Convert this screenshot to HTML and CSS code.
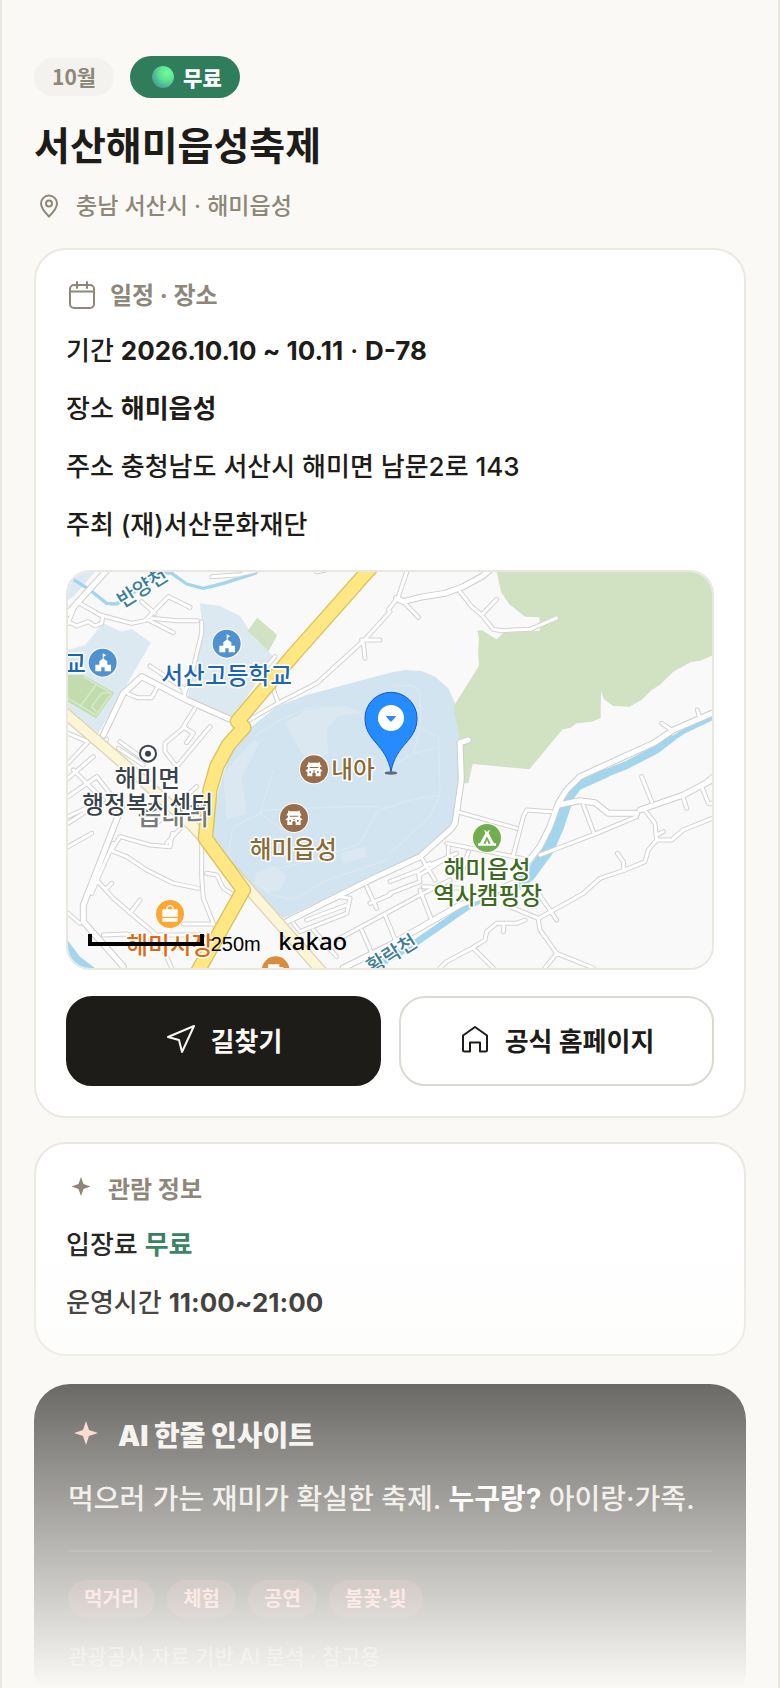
FILE: index.html
```html
<!DOCTYPE html>
<html lang="ko">
<head>
    <meta charset="UTF-8">
    <meta name="viewport" content="width=device-width, initial-scale=1.0">
    <title>서산해미읍성축제</title>
    <link rel="stylesheet" href="styles.css">
</head>
<body>
    <main class="page">
        <header class="hero">
            <div class="badges">
                <span class="badge">10월</span>
                <span class="badge badge-free">
                    <svg class="dot" viewBox="0 0 22 22" aria-hidden="true">
                        <defs>
                            <radialGradient id="ball" cx="0.68" cy="0.32" r="0.75">
                                <stop offset="0" stop-color="#6dfda0"/>
                                <stop offset="0.45" stop-color="#5fe293"/>
                                <stop offset="1" stop-color="#4a9a98"/>
                            </radialGradient>
                        </defs>
                        <circle cx="11" cy="11" r="11" fill="url(#ball)"/>
                    </svg>
                    무료
                </span>
            </div>
            <h1 class="title">서산해미읍성축제</h1>
            <p class="location">
                <svg class="pin-icon" viewBox="0 0 30 30" aria-hidden="true">
                    <path d="M15 25.500C10 20.500 7 16.500 7 12.500a8 8 0 0 1 16 0c0 4-3 8-8 13z"/>
                    <circle cx="15" cy="12.500" r="3"/>
                </svg>
                충남 서산시 · 해미읍성
            </p>
        </header>

        <section class="card">
            <h2 class="card-title">
                <svg class="calendar-icon" viewBox="0 0 32 32" aria-hidden="true">
                    <rect x="4" y="5" width="24" height="23" rx="4"/>
                    <path d="M4 11.500h24M11 2v6M21 2v6"/>
                </svg>
                일정 · 장소
            </h2>
            <div class="rows">
                <p>기간 <strong>2026.10.10 ~ 10.11</strong> · <strong>D-78</strong></p>
                <p>장소 <strong>해미읍성</strong></p>
                <p>주소 충청남도 서산시 해미면 남문2로 143</p>
                <p>주최 (재)서산문화재단</p>
            </div>

            <div class="map">
                <svg class="map-canvas" viewBox="24 36 1932 1188" preserveAspectRatio="xMidYMid slice" role="img" aria-label="해미읍성 지도">
                    <defs>
                        <g id="roads-small">
                            <path d="M24 190L50 125L120 165L215 190L255 182L325 110L390 142"/>
                            <path d="M24 185L50 198L85 185L105 198L125 190L128 170"/>
                            <path d="M245 125L285 160M265 180L340 218M275 175L350 182L412 182"/>
                            <path d="M455 50L540 44L620 24M770 36L840 20"/>
                            <path d="M425 185L425 220L408 290L395 345L370 410"/>
                            <path d="M270 318L370 385L375 410M205 402L232 413L275 413L290 385"/>
                            <path d="M645 290L610 330M632 365L655 430M560 485L650 432L770 370L915 238L990 155M905 240L960 240M910 250L915 295"/>
                            <path d="M405 445L370 500L400 520L380 548M375 500L315 550L315 575L350 620L450 500"/>
                            <path d="M140 538L125 552M24 520L60 535L85 545L24 610M180 545L240 590M175 565L250 615M170 590L215 620"/>
                            <path d="M24 655L100 590M24 710L110 650L150 700M40 630L130 720L24 770M24 790L100 740"/>
                            <path d="M155 870L180 830L270 855L330 860L338 820M150 870L200 890L260 930L340 970L415 985"/>
                            <path d="M160 850L120 940L95 1000M110 960L160 1015L230 1075L290 1125L335 1224M155 970L140 985M210 1060L240 1020"/>
                            <path d="M425 850L425 950L430 1015L462 1095M370 1092L460 1092M440 940L470 945L490 985L530 1010"/>
                            <path d="M130 1125L200 1122L260 1140M300 1125L420 1125M24 1060L60 1090"/>
                            <path d="M320 850L420 740M290 790L410 680M24 860L95 820"/>
                            <path d="M1040 36L1015 110L985 150M1030 125L1075 172M1200 95L1235 140L1265 165L1310 118M1265 165L1300 208L1325 212L1410 208L1490 174"/>
                            <path d="M1920 475L1912 450M1835 510L1805 490M1745 650L1775 725M1870 715L1880 745M1925 680L1945 730L1956 730"/>
                            <path d="M1190 755L1370 805M1475 755L1400 750L1390 770L1360 885M1160 850L1360 890L1410 900M1165 860L1165 890L1080 945M1225 875L1210 925M1085 895L1125 960"/>
                            <path d="M1440 885L1610 820L1730 770M1570 735L1600 815M1750 745L1785 790L1790 840L1765 870L1755 905L1695 930L1620 955L1570 1000L1500 1040L1435 1075L1350 1040"/>
                            <path d="M1790 840L1835 840L1870 810L1956 775M1790 825L1810 815M1672 880L1690 905L1692 930M1435 1000L1490 1080"/>
                            <path d="M1435 1080L1440 1110L1490 1180L1600 1224M1490 1180L1455 1224M1395 1080L1370 1090L1310 1090L1280 1115L1275 1140L1235 1165L1160 1205L1140 1224M1240 1165L1300 1224M1332 1095L1330 1115"/>
                            <path d="M690 1075L840 1010L870 1015L860 1060L720 1115L700 1090M740 1080L860 1035M990 965L1080 930L1110 910M990 1005L930 1030M1075 940L1080 965L990 1000"/>
                            <path d="M920 980L950 1045M830 1140L1080 1005L1170 960M760 1110L830 1190M905 1110L940 1190M975 1065L1010 1150M1080 990L1115 1080M1090 980L1210 985"/>
                            <path d="M1110 915L1190 880M1956 650L1920 680"/>
                        </g>
                        <g id="roads-big">
                            <path d="M24 160L150 20"/>
                            <path d="M130 525L190 400L245 350L380 420L515 480"/>
                            <path d="M185 740L70 1035L70 1085L190 1220"/>
                            <path d="M1010 115L1030 125L1080 112L1155 100L1210 80L1265 50L1290 30"/>
                            <path d="M1225 540L1200 548L1204 660L1185 790L1175 805L1080 890L940 955L680 1085"/>
                            <path d="M1956 460L1840 510L1780 550L1560 650L1520 690L1495 730L1470 800L1440 860L1400 910"/>
                            <path d="M1495 735L1560 722L1605 728L1645 760L1730 760"/>
                            <path d="M1740 750L1870 705L1956 660"/>
                            <path d="M850 1224L990 1155L1200 1035L1360 970"/>
                        </g>
                        <g id="school">
                            <circle r="45" fill="#fff"/>
                            <circle r="42" fill="#5092cf"/>
                            <path fill="#fff" d="M-22 26V6h12v-10L0-12l0-16 11 6-8 4v6l11 8V6h11v20H6V14h-10v12z"/>
                        </g>
                        <g id="palace">
                            <circle r="45" fill="#fff"/>
                            <circle r="42" fill="#986d4b"/>
                            <path fill="#fff" d="M-17-23l4 3h26l4-3 1 7 5 8-5 1v5l8 7-6 2v14H5V12q-5-6-10 0v9h-15V7l-6-2 8-7v-5l-5-1 5-8z"/>
                            <path fill="#986d4b" d="M-13-7h26v3h-26zM-14 6h5v5h-5zM9 6h5v5H9zM-2 3h4v4h-4z"/>
                        </g>
                    </defs>

                    <rect x="24" y="36" width="1932" height="1188" fill="#f9f9f9"/>

                    <!-- school grounds, castle, forest -->
                    <path fill="#dde9f1" d="M24 36H105L40 110L24 120zM24 270L75 255L130 190L185 215L215 207L273 248L115 520L24 450z"/>
                    <path fill="#dde9f1" d="M420 130L480 138L540 168L580 230L640 290L600 350L520 475L380 425L405 300L428 220z"/>
                    <path fill="#d2e4ef" d="M740 405L990 338L1035 330L1085 333L1125 350L1165 385L1190 440L1205 520L1208 660L1175 800L1090 880L670 1075L575 985L440 830L490 640L520 560L575 500L650 440z"/>
                    <g fill="#dce8f1">
                        <path d="M675 490L740 450L860 440L905 458L830 470L800 510L805 580L760 600L725 580z"/>
                        <path d="M490 640L580 540L600 545L545 650L560 760L500 780z"/>
                        <path d="M590 940L640 915L680 950L660 990L620 1000L580 970zM840 880L915 860L920 890L850 910z"/>
                    </g>
                    <g class="paths">
                        <path d="M500 900L520 800L620 750L860 740L960 740L900 850L760 900L640 930M580 530L660 480L740 445L860 440L960 500"/>
                        <path d="M1000 375L1060 378L1080 400L1080 505L1135 530L1140 700L1110 770L990 880M1080 505L1060 580L960 640M1060 580L1138 562M960 750L1050 720L1138 705"/>
                        <path d="M640 630L600 760L680 820M620 1000L700 1020L800 960L980 900"/>
                    </g>
                    <path fill="#d1e2c3" d="M1310 36L1323 95L1347 132L1395 170L1438 172L1440 212L1330 218L1310 238L1265 210L1252 212L1257 235L1254 280L1257 317L1180 440L1196 520L1203 600L1207 670L1225 670L1238 612L1408 628L1508 508L1530 504L1550 490L1595 485L1622 475L1623 393L1632 418L1660 438L1708 440L1745 420L1775 390L1800 374L1840 335L1893 306L1920 302L1956 287V36z"/>
                    <path fill="#d1e2c3" d="M592 173L652 225L625 275L563 212z"/>
                    <path fill="#c3dcae" d="M24 345L70 345L163 398L108 475L24 425z"/>
                    <path class="pitch" d="M24 415L108 465L155 400L70 350M60 440L108 375M150 398L125 400L95 440L110 455"/>

                    <!-- streams -->
                    <path class="stream" stroke-width="10" d="M40 58L90 90L140 130L170 132L205 110L300 36L335 40L380 72L430 85L490 70L590 38"/>
                    <path class="stream" stroke-width="24" d="M1600 655L1700 615L1790 568L1840 530"/>
                    <path class="stream" stroke-width="14" d="M1800 560L1870 515L1956 474"/>
                    <path class="stream" stroke-width="34" d="M1640 635L1550 675L1525 710L1495 800L1465 870L1410 945L1370 975"/>
                    <path class="stream" stroke-width="20" d="M1400 955L1230 1035L1065 1150L940 1224"/>
                    <path fill="#a3d6ec" d="M24 1142L60 1190L105 1224H24z"/>

                    <use href="#roads-small" class="road small-edge"/>
                    <use href="#roads-big" class="road big-edge"/>
                    <use href="#roads-small" class="road small-fill"/>
                    <use href="#roads-big" class="road big-fill"/>

                    <path class="road" stroke="#ded3b8" stroke-width="36" d="M10 455L230 645L400 800L560 980L790 1240"/>
                    <path class="road" stroke="#fcf6d6" stroke-width="28" d="M10 455L230 645L400 800L560 980L790 1240"/>
                    <path class="road" stroke="#d9c35c" stroke-width="46" d="M935 20L700 285L532 484L552 502L505 555L470 620L450 690L436 835L550 990L410 1240"/>
                    <path class="road" stroke="#ffe784" stroke-width="38" d="M935 20L700 285L532 484L552 502L505 555L470 620L450 690L436 835L550 990L410 1240"/>

                    <!-- labels and markers -->
                    <g class="label">
                        <text class="water" transform="translate(188 145) rotate(-32)">반양천</text>
                        <text class="water" transform="translate(936 1244) rotate(-32)">황락천</text>
                        <text class="blue" x="500" y="373" text-anchor="middle">서산고등학교</text>
                        <text class="blue" x="78" y="335" text-anchor="end">교</text>
                        <text class="brown" x="814" y="653">내아</text>
                        <text class="brown" x="700" y="894" text-anchor="middle">해미읍성</text>
                        <text class="gray" x="340" y="795" text-anchor="middle">읍내리</text>
                        <text class="slate" x="262" y="680" text-anchor="middle">해미면</text>
                        <text class="slate" x="263" y="760" text-anchor="middle">행정복지센터</text>
                        <text class="orange" x="329" y="1182" text-anchor="middle">해미시장</text>
                        <text class="green" x="1281" y="955" text-anchor="middle">해미읍성</text>
                        <text class="green" x="1283" y="1033" text-anchor="middle">역사캠핑장</text>
                    </g>
                    <use href="#school" x="500" y="251"/>
                    <use href="#school" x="128" y="308"/>
                    <use href="#palace" x="762" y="628"/>
                    <use href="#palace" x="702" y="774"/>
                    <circle cx="264" cy="581" r="24" fill="#fff" stroke="#39434b" stroke-width="6"/>
                    <circle cx="264" cy="581" r="9" fill="#39434b"/>
                    <g transform="translate(330 1062)">
                        <circle r="45" fill="#fff"/>
                        <circle r="42" fill="#ffa733"/>
                        <path fill="#fff" d="M-23-14h46V8h-46zM-23 12h46v11h-46z"/>
                        <path fill="none" stroke="#fff" stroke-width="4" d="M-9-12v-8q9-10 18 0v8"/>
                    </g>
                    <g transform="translate(647 1231)">
                        <circle r="45" fill="#fff"/>
                        <circle r="42" fill="#d98c3d"/>
                        <path fill="#fff" d="M-23-18h34v8h12v14H11v20h-34z"/>
                    </g>
                    <g transform="translate(1281 834)">
                        <circle r="45" fill="#fff"/>
                        <circle r="42" fill="#72ad4e"/>
                        <path fill="#fff" d="M-9-24l6 2 3 5 3-5 6-2-4 10 16 30h6v7h-54v-7h6l16-30z"/>
                        <path fill="#72ad4e" d="M0-5L11 17H4L0 5-4 17H-11z"/>
                    </g>

                    <ellipse cx="993" cy="639" rx="19" ry="5" fill="#5d6d7a"/>
                    <path fill="#268bfc" stroke="#0f5ac6" stroke-width="3" d="M993 635C978 550 915 545 915 474a78 77 0 0 1 156 0C1071 545 1008 550 993 635z"/>
                    <circle cx="993" cy="474" r="39" fill="#fff"/>
                    <path fill="#268bfc" d="M978 468h30q0 3-13 16-2 2-4 0-13-13-13-16z"/>

                    <!-- scale bar -->
                    <path fill="none" stroke="#000" stroke-width="12" d="M90 1122V1152H426V1122"/>
                    <text class="scale" x="452" y="1174">250m</text>
                    <text class="brand" x="655" y="1170">kakao</text>
                </svg>
            </div>

            <div class="actions">
                <button type="button" class="btn btn-dark">
                    <svg viewBox="0 0 32 32" aria-hidden="true"><path d="M29 3L3 14l11 3 3 12z"/></svg>
                    길찾기
                </button>
                <button type="button" class="btn">
                    <svg viewBox="0 0 32 32" aria-hidden="true"><path d="M16 4L4 12.500V27q0 1.500 1.500 1.500H11V19.500h10v9h5.500Q28 28.500 28 27V12.500z"/></svg>
                    공식 홈페이지
                </button>
            </div>
        </section>

        <section class="card">
            <h2 class="card-title">
                <svg class="star" viewBox="0 0 30 30" aria-hidden="true"><path d="M15 2l2.500 7 7 2.500-7 2.500L15 21l-2.500-7-7-2.500 7-2.500z"/></svg>
                관람 정보
            </h2>
            <div class="rows">
                <p>입장료 <strong class="free">무료</strong></p>
                <p>운영시간 <strong>11:00~21:00</strong></p>
            </div>
        </section>

        <section class="insight">
            <h2 class="insight-title">
                <svg class="insight-star" viewBox="0 0 36 36" aria-hidden="true"><path d="M18 3l3 9 9 3-9 3-3 9-3-9-9-3 9-3z"/></svg>
                AI 한줄 인사이트
            </h2>
            <p class="insight-text">먹으러 가는 재미가 확실한 축제. <strong>누구랑?</strong> 아이랑·가족.</p>
            <ul class="chips">
                <li>먹거리</li>
                <li>체험</li>
                <li>공연</li>
                <li>불꽃·빛</li>
            </ul>
            <p class="note">관광공사 자료 기반 AI 분석 · 참고용</p>
        </section>
        <div class="fade"></div>
    </main>
</body>
</html>
```
FILE: styles.css
```css
* {
    box-sizing: border-box;
}
body {
    margin: 0;
    background: #faf9f6;
    color: #1e1c18;
    font-family: Inter, "Noto Sans CJK KR", sans-serif;
    font-size: 26px;
    font-weight: 500;
    line-height: 42px;
}
h1, h2, p, ul {
    margin: 0;
    padding: 0;
}
strong {
    font-weight: 700;
}
.page {
    position: relative;
    height: 100vh;
    overflow: hidden;
    padding: 56px 32px 0;
    border-left: 2px solid #e9e8e1;
    border-right: 2px solid #e9e8e1;
}
.fade {
    position: absolute;
    left: -2px;
    right: -2px;
    bottom: 0;
    height: 468px;
    background: linear-gradient(rgba(250, 249, 246, 0), #faf9f6);
    pointer-events: none;
}

/* header */
.hero {
    margin-bottom: 24px;
}
.badges {
    display: flex;
    align-items: center;
    gap: 16px;
}
.badge {
    padding: 0 18px;
    border-radius: 21px;
    background: #f3f2ee;
    color: #8d8779;
    font-family: "Noto Sans CJK KR", sans-serif;
    font-size: 21px;
    font-weight: 700;
    line-height: 36px;
    padding-bottom: 2px;
}
.badge-free {
    display: flex;
    align-items: center;
    gap: 9px;
    padding: 0 18px 0 22px;
    background: #2f7d5b;
    color: #fff;
    font-weight: 900;
    line-height: 42px;
}
.dot {
    width: 22px;
    height: 22px;
}
.title {
    margin-top: 22px;
    font-size: 39px;
    font-weight: 700;
    line-height: 52px;
}
.location {
    display: flex;
    align-items: center;
    gap: 12px;
    margin-top: 16px;
    color: #8d8779;
    font-size: 23px;
    line-height: 36px;
}
.pin-icon {
    width: 30px;
    height: 30px;
    fill: none;
    stroke: #8d8779;
    stroke-width: 2;
}

/* cards */
.card {
    margin-bottom: 24px;
    padding: 30px;
    border: 2px solid #eae8e1;
    border-radius: 32px;
    background: #fff;
}
.card-title {
    display: flex;
    align-items: center;
    gap: 12px;
    margin-bottom: 18px;
    color: #8d8779;
    font-size: 24px;
    font-weight: 700;
    line-height: 32px;
}
.calendar-icon {
    width: 32px;
    height: 32px;
    fill: none;
    stroke: #8d8779;
    stroke-width: 2;
    stroke-linecap: round;
}
.star {
    width: 30px;
    height: 30px;
    fill: #8d8779;
}
.rows {
    display: flex;
    flex-direction: column;
    gap: 16px;
}
.free {
    color: #2f7d5b;
}

/* map */
.map {
    height: 400px;
    margin-top: 24px;
    overflow: hidden;
    border: 2px solid #eae6e0;
    border-radius: 24px;
}
.map-canvas {
    display: block;
    width: 100%;
    height: 100%;
}
.road {
    fill: none;
    stroke-linecap: round;
    stroke-linejoin: round;
}
.small-edge {
    stroke: #d2d2d2;
    stroke-width: 15px;
}
.small-fill {
    stroke: #fff;
    stroke-width: 9px;
}
.big-edge {
    stroke: #cdcdcd;
    stroke-width: 21px;
}
.big-fill {
    stroke: #fff;
    stroke-width: 15px;
}
.stream {
    fill: none;
    stroke: #a3d6ec;
    stroke-linejoin: round;
}
.paths {
    fill: none;
    stroke: #dce8f1;
    stroke-width: 4px;
}
.pitch {
    fill: none;
    stroke: #d9eacb;
    stroke-width: 4px;
}
.label {
    font-family: "Noto Sans CJK KR", sans-serif;
    font-size: 71px;
    font-weight: 500;
    paint-order: stroke;
    stroke: #fff;
    stroke-width: 9px;
    stroke-linejoin: round;
}
.water {
    fill: #3d7d99;
    font-size: 60px;
}
.blue {
    fill: #1b66b4;
}
.brown {
    fill: #8a6a35;
}
.gray {
    fill: #7b7b7b;
    font-size: 78px;
}
.slate {
    fill: #39434b;
}
.orange {
    fill: #e0690f;
}
.green {
    fill: #3d6b21;
}
.scale {
    font-family: "Liberation Sans", Arial, sans-serif;
    font-size: 60px;
    font-weight: 400;
}
.brand {
    font-family: "Noto Sans", sans-serif;
    font-size: 72px;
    font-weight: 500;
}

/* buttons */
.actions {
    display: flex;
    gap: 18px;
    margin-top: 26px;
}
.btn {
    display: flex;
    flex: 1;
    align-items: center;
    justify-content: center;
    gap: 14px;
    height: 90px;
    padding: 0 0 4px;
    border: 2px solid #dcd9d1;
    border-radius: 26px;
    background: #fff;
    color: #1e1c18;
    font-family: inherit;
    font-size: 26px;
    font-weight: 700;
    cursor: pointer;
}
.btn svg {
    width: 32px;
    height: 32px;
    fill: none;
    stroke: currentColor;
    stroke-width: 2;
    stroke-linejoin: round;
}
.btn-dark {
    border-color: #1e1c18;
    background: #1e1c18;
    color: #faf9f6;
}

/* AI insight */
.insight {
    margin-top: 28px;
    padding: 34px;
    border-radius: 36px;
    background: #1e1c18;
}
.insight-title {
    display: flex;
    align-items: center;
    gap: 14px;
    color: #f1efea;
    font-size: 28px;
    font-weight: 900;
    line-height: 36px;
}
.insight-star {
    width: 36px;
    height: 36px;
    fill: #ffc4b5;
}
.insight-text {
    padding-bottom: 28px;
    margin-top: 22px;
    border-bottom: 2px solid rgba(255, 255, 255, 0.12);
    color: #e6e4dd;
    font-size: 28px;
    font-weight: 500;
    line-height: 46px;
}
.insight-text strong {
    color: #fff;
}
.chips {
    display: flex;
    flex-wrap: wrap;
    gap: 12px;
    margin-top: 28px;
    list-style: none;
}
.chips li {
    padding: 0 16px;
    border-radius: 19px;
    background: rgba(255, 120, 95, 0.2);
    color: #ffab9b;
    font-size: 20px;
    font-weight: 700;
    line-height: 38px;
}
.note {
    margin-top: 24px;
    color: rgba(255, 255, 255, 0.5);
    font-size: 21px;
    line-height: 30px;
}
```
